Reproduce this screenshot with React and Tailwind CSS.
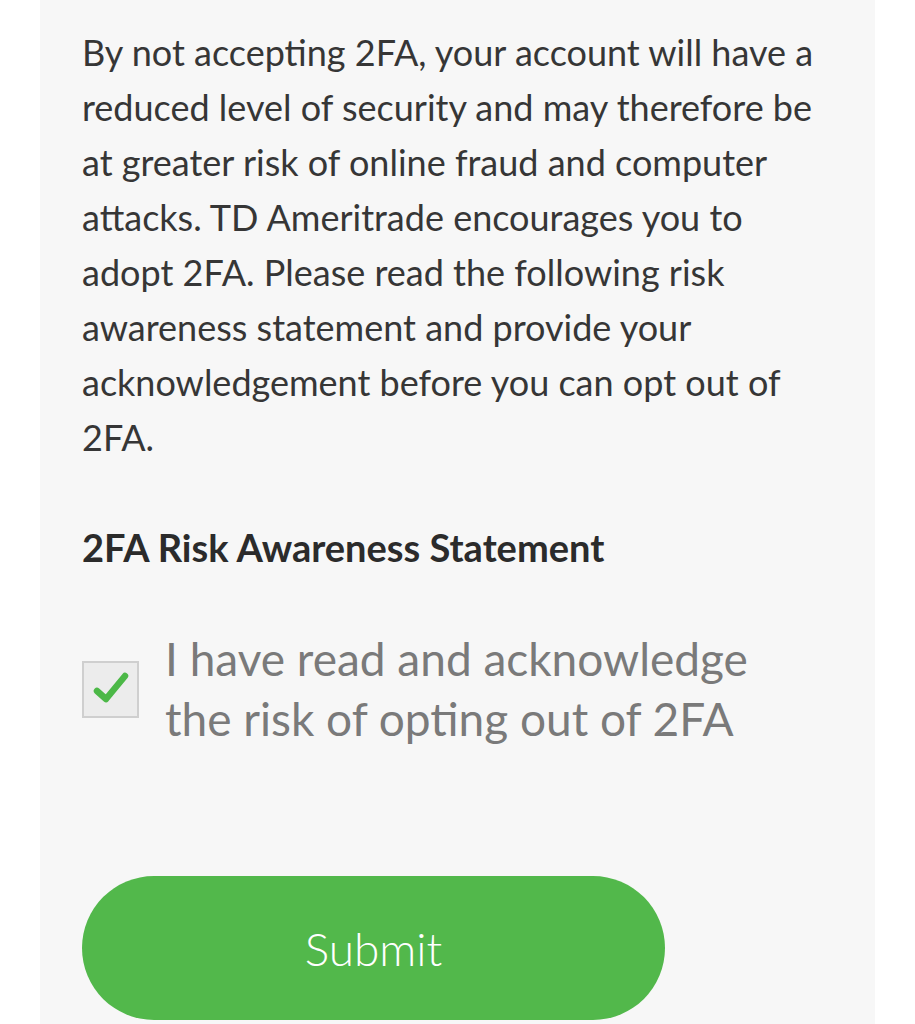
import React from "react";

function Check() {
  return (
    <svg viewBox="0 0 53 53" className="w-[53px] h-[53px]">
      <path d="M13 28l9 8L41 13" fill="none" stroke="#4cb847" strokeWidth="6.5" strokeLinecap="round" strokeLinejoin="round" />
    </svg>
  );
}

export default function App() {
  return (
    <div className="min-h-[1024px] bg-white font-['Lato',sans-serif]">
      <div className="ml-[40px] w-[835px] min-h-[1024px] bg-[#f7f7f7] pl-[42px] pr-[20px] pt-[25px]">
        <p className="text-[36px] leading-[55px] text-[#363636] whitespace-nowrap">
          By not accepting 2FA, your account will have a<br />
          reduced level of security and may therefore be<br />
          at greater risk of online fraud and computer<br />
          attacks. TD Ameritrade encourages you to<br />
          adopt 2FA. Please read the following risk<br />
          awareness statement and provide your<br />
          acknowledgement before you can opt out of<br />
          2FA.
        </p>
        <h2 className="mt-[55px] text-[38px] leading-[55px] font-bold text-[#2b2b2b]">
          2FA Risk Awareness Statement
        </h2>
        <label className="mt-[54px] flex items-center gap-[26px]">
          <span className="w-[57px] h-[57px] shrink-0 flex items-center justify-center bg-[#ececec] border-2 border-[#cfcfcf]">
            <Check />
          </span>
          <span className="text-[46px] leading-[60px] text-[#7a7a7a] whitespace-nowrap">
            I have read and acknowledge<br />
            the risk of opting out of 2FA
          </span>
        </label>
        <button className="mt-[127px] w-[583px] h-[144px] rounded-full bg-[#52b84b] text-white text-[46px] font-light">
          Submit
        </button>
      </div>
    </div>
  );
}
